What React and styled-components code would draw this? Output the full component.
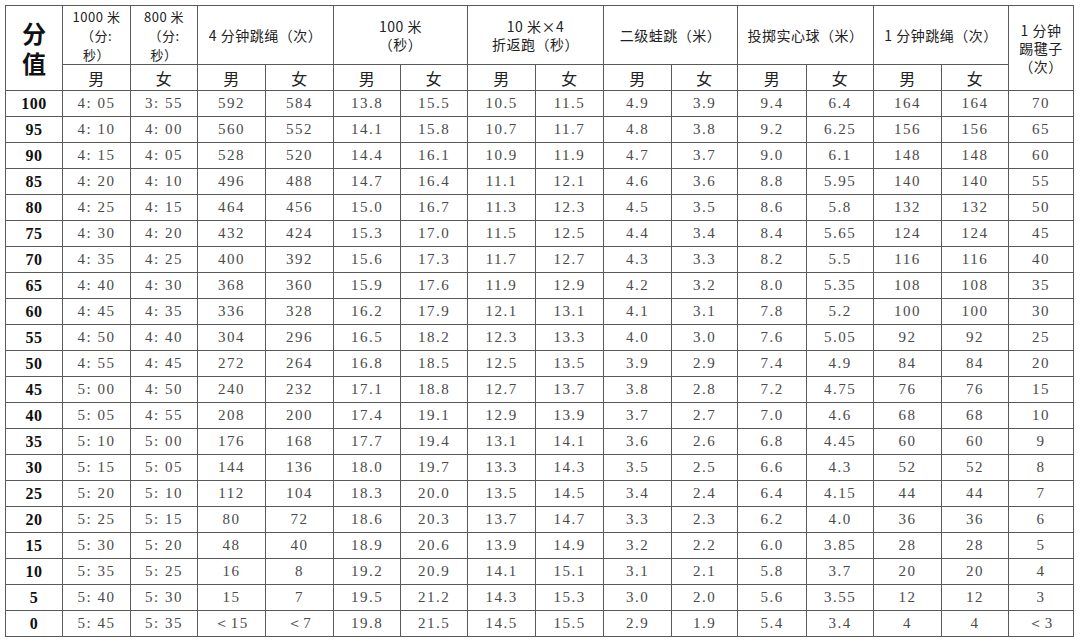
import styled, { createGlobalStyle } from "styled-components";

const GlobalStyle = createGlobalStyle`
  html, body {
    margin: 0;
    padding: 0;
    background: #ffffff;
  }
`;

const widths = [57, 68, 67, 68, 68, 67, 67, 68, 68, 68, 66, 69, 67, 68, 67, 65];

const f1 = (n) => n.toFixed(1);
const seq = (start, step, fmt) =>
  Array.from({ length: 21 }, (_, i) => fmt(start + step * i));
const time = (secs) => {
  const m = Math.floor(secs / 60);
  const s = String(secs % 60).padStart(2, "0");
  return `${m}: ${s}`;
};

const scores = seq(100, -5, String);
const rope4Boys = [...seq(592, -32, String).slice(0, 19), "15", "＜15"];
const rope4Girls = [...seq(584, -32, String).slice(0, 19), "7", "＜7"];
const throwGirls = seq(6.4, -0.15, (n) => {
  const v = Math.round(n * 100) / 100;
  return String(v).includes(".") ? String(v) : v.toFixed(1);
});
const rope1 = seq(164, -8, String);
const shuttle = [
  "70", "65", "60", "55", "50", "45", "40", "35", "30", "25", "20",
  "15", "10", "9", "8", "7", "6", "5", "4", "3", "＜3",
];

const columns = [
  seq(245, 5, time),
  seq(235, 5, time),
  rope4Boys,
  rope4Girls,
  seq(13.8, 0.3, f1),
  seq(15.5, 0.3, f1),
  seq(10.5, 0.2, f1),
  seq(11.5, 0.2, f1),
  seq(4.9, -0.1, f1),
  seq(3.9, -0.1, f1),
  seq(9.4, -0.2, f1),
  throwGirls,
  rope1,
  rope1,
  shuttle,
];

const groups = [
  { lines: ["100 米", "（秒）"] },
  { lines: ["10 米×4", "折返跑（秒）"] },
  { lines: ["二级蛙跳（米）"] },
  { lines: ["投掷实心球（米）"] },
  { lines: ["1 分钟跳绳（次）"] },
];

const Page = styled.div`
  padding: 5px 0 0 5px;
`;

const Table = styled.table`
  border-collapse: collapse;
  table-layout: fixed;
  width: 1069px;
  color: #222;
`;

const Head = styled.th`
  border: 1px solid #5a5a5a;
  padding: 0;
  font-family: "Noto Sans CJK SC", "Noto Sans", sans-serif;
  font-weight: 400;
  font-size: ${(p) => (p.$small ? "13px" : "14px")};
  line-height: ${(p) => (p.$small ? "19px" : "18px")};
  letter-spacing: 0.5px;
  text-align: center;
  vertical-align: middle;
  height: ${(p) => (p.$tall ? "58px" : "25px")};
  color: #222;
`;

const ScoreHead = styled(Head)`
  font-size: 24px;
  line-height: 30px;
  font-weight: 700;
  letter-spacing: 0;
  color: #111;
`;

const SexHead = styled(Head)`
  font-size: 16px;
`;

const Cell = styled.td`
  border: 1px solid #5a5a5a;
  padding: 0;
  height: 25px;
  text-align: center;
  vertical-align: middle;
  font-family: "Liberation Serif", "Times New Roman", serif;
  font-size: 15px;
  letter-spacing: 1.5px;
  color: #4a4a4a;
`;

const ScoreCell = styled(Cell)`
  font-weight: 700;
  font-size: 16px;
  letter-spacing: 0.5px;
  color: #111;
`;

function Lines({ lines }) {
  return lines.map((l, i) => (
    <span key={i}>
      {l}
      {i < lines.length - 1 && <br />}
    </span>
  ));
}

export default function App() {
  return (
    <Page>
      <GlobalStyle />
      <Table>
        <colgroup>
          {widths.map((w, i) => (
            <col key={i} style={{ width: w }} />
          ))}
        </colgroup>
        <thead>
          <tr>
            <ScoreHead rowSpan={2}>
              分<br />值
            </ScoreHead>
            <Head $tall $small>
              <Lines lines={["1000 米", "（分:", "秒）"]} />
            </Head>
            <Head $tall $small>
              <Lines lines={["800 米", "（分:", "秒）"]} />
            </Head>
            <Head $tall colSpan={2}>
              4 分钟跳绳（次）
            </Head>
            {groups.map((g, i) => (
              <Head $tall colSpan={2} key={i}>
                <Lines lines={g.lines} />
              </Head>
            ))}
            <Head rowSpan={2}>
              <Lines lines={["1 分钟", "踢毽子", "（次）"]} />
            </Head>
          </tr>
          <tr>
            {Array.from({ length: 14 }, (_, i) => (
              <SexHead key={i}>{i % 2 === 0 ? "男" : "女"}</SexHead>
            ))}
          </tr>
        </thead>
        <tbody>
          {scores.map((s, r) => (
            <tr key={s}>
              <ScoreCell>{s}</ScoreCell>
              {columns.map((col, c) => (
                <Cell key={c}>{col[r]}</Cell>
              ))}
            </tr>
          ))}
        </tbody>
      </Table>
    </Page>
  );
}
